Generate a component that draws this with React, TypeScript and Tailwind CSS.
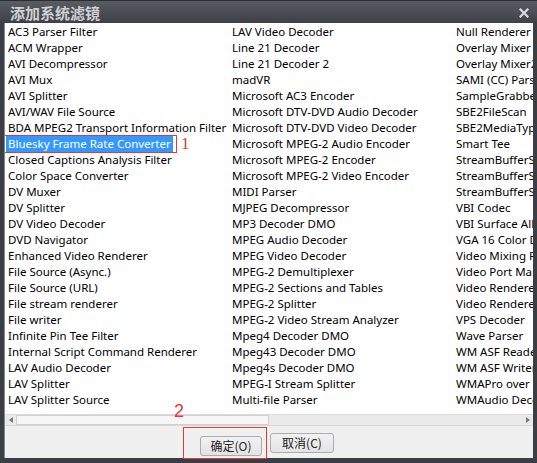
import React from 'react';

const col1 = [
  'AC3 Parser Filter',
  'ACM Wrapper',
  'AVI Decompressor',
  'AVI Mux',
  'AVI Splitter',
  'AVI/WAV File Source',
  'BDA MPEG2 Transport Information Filter',
  'Bluesky Frame Rate Converter',
  'Closed Captions Analysis Filter',
  'Color Space Converter',
  'DV Muxer',
  'DV Splitter',
  'DV Video Decoder',
  'DVD Navigator',
  'Enhanced Video Renderer',
  'File Source (Async.)',
  'File Source (URL)',
  'File stream renderer',
  'File writer',
  'Infinite Pin Tee Filter',
  'Internal Script Command Renderer',
  'LAV Audio Decoder',
  'LAV Splitter',
  'LAV Splitter Source',
];

const col2 = [
  'LAV Video Decoder',
  'Line 21 Decoder',
  'Line 21 Decoder 2',
  'madVR',
  'Microsoft AC3 Encoder',
  'Microsoft DTV-DVD Audio Decoder',
  'Microsoft DTV-DVD Video Decoder',
  'Microsoft MPEG-2 Audio Encoder',
  'Microsoft MPEG-2 Encoder',
  'Microsoft MPEG-2 Video Encoder',
  'MIDI Parser',
  'MJPEG Decompressor',
  'MP3 Decoder DMO',
  'MPEG Audio Decoder',
  'MPEG Video Decoder',
  'MPEG-2 Demultiplexer',
  'MPEG-2 Sections and Tables',
  'MPEG-2 Splitter',
  'MPEG-2 Video Stream Analyzer',
  'Mpeg4 Decoder DMO',
  'Mpeg43 Decoder DMO',
  'Mpeg4s Decoder DMO',
  'MPEG-I Stream Splitter',
  'Multi-file Parser',
];

const col3 = [
  'Null Renderer',
  'Overlay Mixer',
  'Overlay Mixer2',
  'SAMI (CC) Parser',
  'SampleGrabber',
  'SBE2FileScan',
  'SBE2MediaTypeProfile',
  'Smart Tee',
  'StreamBufferSink',
  'StreamBufferSink2',
  'StreamBufferSource',
  'VBI Codec',
  'VBI Surface Allocator',
  'VGA 16 Color Ditherer',
  'Video Mixing Renderer 9',
  'Video Port Manager',
  'Video Renderer',
  'Video Renderer',
  'VPS Decoder',
  'Wave Parser',
  'WM ASF Reader',
  'WM ASF Writer',
  'WMAPro over S/PDIF DMO',
  'WMAudio Decoder DMO',
];

const SELECTED = 'Bluesky Frame Rate Converter';

const Column = ({ items }: { items: string[] }) => (
  <div className="w-[224px] shrink-0 flex flex-col">
    {items.map((name, i) => (
      <div key={i} className="relative h-[16px] leading-[16px] whitespace-nowrap">
        {name === SELECTED ? (
          <>
            <span className="relative inline-block px-[2px] bg-[#3399ff] text-white">
              {name}
              {/* annotation box */}
              <span className="absolute left-[-5px] right-[-4px] top-[-1px] bottom-[-1px] border border-[#e53935]" />
            </span>
            <span className="absolute left-[175px] top-[-1px] text-[17px] leading-[18px] text-[#e53935] font-['Liberation_Serif',serif]">
              1
            </span>
          </>
        ) : (
          <span className="inline-block px-[2px]">{name}</span>
        )}
      </div>
    ))}
  </div>
);

const Button = ({ label, width }: { label: string; width: string }) => (
  <button
    className={`${width} h-[20px] border border-[#acacac] rounded-[3px] bg-gradient-to-b from-[#f2f2f2] to-[#e3e3e3] text-[12px] text-[#222] leading-[18px] font-['Noto_Sans_CJK_SC',sans-serif]`}
  >
    {label}
  </button>
);

export default function App() {
  return (
    <div className="w-[537px] h-[463px] bg-[#3b3e45] flex flex-col font-['Noto_Sans','Noto_Sans_CJK_SC',sans-serif] overflow-hidden">
      {/* Title bar */}
      <div className="h-[23px] shrink-0 flex items-center justify-between pl-[10px] pr-[8px] bg-gradient-to-b from-[#595c63] to-[#3d4047] border-t border-[#2a2c31]">
        <span className="text-[15px] font-bold text-[#cfd0d3] font-['Noto_Sans_CJK_SC',sans-serif] leading-none">
          添加系统滤镜
        </span>
        <svg width="10" height="10" viewBox="0 0 10 10" className="mt-[1px]">
          <path d="M1.5 1.5 L8.5 8.5 M8.5 1.5 L1.5 8.5" stroke="#d8d9dc" strokeWidth="2.2" strokeLinecap="square" />
        </svg>
      </div>

      {/* Body */}
      <div className="flex-1 flex flex-col pl-[4px] pr-[4px] pb-[5px]">
        <div className="relative flex-1 flex flex-col bg-white border-l border-[#828790]">
          {/* List */}
          <div className="flex-1 overflow-hidden flex pt-[1px] pl-[1px] text-[11.5px] text-[#000]">
            <Column items={col1} />
            <Column items={col2} />
            <Column items={col3} />
          </div>

          {/* annotation 2 */}
          <span className="absolute left-[169px] top-[378px] text-[18px] leading-[20px] text-[#e53935] font-['Liberation_Sans',sans-serif]">
            2
          </span>

          {/* Horizontal scrollbar */}
          <div className="h-[11px] shrink-0 flex items-stretch bg-[#eaeaea] border-t border-[#dcdcdc]">
            <div className="w-[11px] flex items-center justify-center">
              <svg width="4" height="6" viewBox="0 0 4 6">
                <path d="M4 0 L0 3 L4 6 Z" fill="#7a7a7a" />
              </svg>
            </div>
            <div className="w-[253px] bg-[#f6f6f6] border border-[#d0d0d0]" />
            <div className="flex-1" />
            <div className="w-[11px] flex items-center justify-center">
              <svg width="4" height="6" viewBox="0 0 4 6">
                <path d="M0 0 L4 3 L0 6 Z" fill="#7a7a7a" />
              </svg>
            </div>
          </div>

          {/* Buttons */}
          <div className="h-[33px] shrink-0 bg-[#f0f0f0] border-t border-[#d8d8d8] flex items-start justify-start gap-[8px] pt-[7px] pl-[195px]">
            <div className="relative">
              <Button label="确定(O)" width="w-[62px]" />
              <span className="absolute left-[-17px] right-[-5px] top-[-6px] bottom-[-2px] border border-[#e53935]" />
            </div>
            <Button label="取消(C)" width="w-[64px]" />
          </div>
        </div>
      </div>
    </div>
  );
}
